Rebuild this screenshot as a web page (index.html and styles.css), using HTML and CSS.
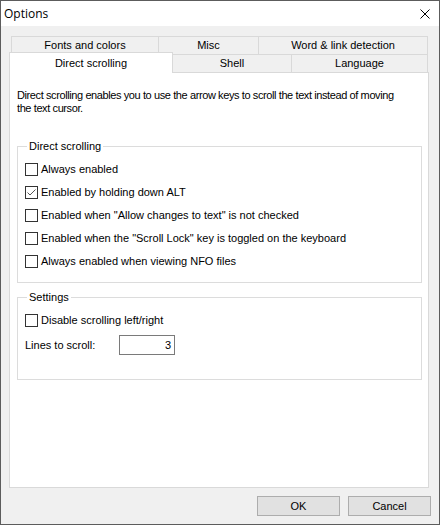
FILE: index.html
```html
<!DOCTYPE html>
<html lang="en">

<head>
    <meta charset="UTF-8">
    <title>Options</title>
    <link rel="stylesheet" href="styles.css">
</head>

<body>
    <div class="window">
        <div class="titlebar">
            <span class="title">Options</span>
            <svg class="close" width="10" height="10" viewBox="0 0 10 10">
                <path d="M0.5 0.5 L9.5 9.5 M9.5 0.5 L0.5 9.5" stroke="#000" stroke-width="1" fill="none" />
            </svg>
        </div>
        <div class="content">
            <div class="tabs">
                <div class="tabrow back">
                    <div class="tab t-fonts">Fonts and colors</div>
                    <div class="tab t-misc">Misc</div>
                    <div class="tab t-word">Word &amp; link detection</div>
                </div>
                <div class="tabrow front">
                    <div class="tab sel t-direct">Direct scrolling</div>
                    <div class="tab t-shell">Shell</div>
                    <div class="tab t-lang">Language</div>
                </div>
            </div>
            <div class="panel">
                <p class="intro">Direct scrolling enables you to use the arrow keys to scroll the text instead of moving<br>the text cursor.</p>

                <fieldset class="group g-direct">
                    <legend>Direct scrolling</legend>
                    <label class="check"><span class="box"></span>Always enabled</label>
                    <label class="check"><span class="box"><svg width="11" height="11" viewBox="0 0 11 11"><path d="M1.5 5.5 L4 8 L9.5 2.5" stroke="#555" stroke-width="1" fill="none" /></svg></span>Enabled by holding down ALT</label>
                    <label class="check"><span class="box"></span>Enabled when "Allow changes to text" is not checked</label>
                    <label class="check"><span class="box"></span>Enabled when the "Scroll Lock" key is toggled on the keyboard</label>
                    <label class="check"><span class="box"></span>Always enabled when viewing NFO files</label>
                </fieldset>

                <fieldset class="group g-settings">
                    <legend>Settings</legend>
                    <label class="check"><span class="box"></span>Disable scrolling left/right</label>
                    <div class="field">
                        <span class="field-label">Lines to scroll:</span>
                        <span class="input">3</span>
                    </div>
                </fieldset>
            </div>
            <div class="buttons">
                <div class="btn">OK</div>
                <div class="btn">Cancel</div>
            </div>
        </div>
    </div>
</body>

</html>
```

FILE: styles.css
```css
body,
p,
fieldset,
legend {
    margin: 0;
    padding: 0;
}

body {
    background: #fff;
    font: 11px/13px "Liberation Sans", Arial, sans-serif;
    color: #000;
}

.window {
    width: 440px;
    height: 525px;
    box-sizing: border-box;
    border: 1px solid #5c5c5c;
    background: #f0f0f0;
    display: flex;
    flex-direction: column;
}

.titlebar {
    height: 25px;
    background: #fff;
    display: flex;
    align-items: center;
    justify-content: space-between;
    padding: 0 9px 0 3px;
}

.title {
    font: 12px "Open Sans", "Noto Sans", sans-serif;
    margin-top: -1px;
}

.content {
    flex: 1;
    padding: 10px 10px 0 8px;
}

/* tabs */
.tabrow {
    display: flex;
}

.tabrow.back {
    margin-left: 2px;
    height: 19px;
}

.tabrow.front {
    margin-top: -1px;
    height: 18px;
    align-items: flex-end;
}

.tab {
    box-sizing: border-box;
    height: 19px;
    border: 1px solid #d9d9d9;
    background: #f0f0f0;
    display: flex;
    align-items: center;
    justify-content: center;
    margin-left: -1px;
}

.tab:first-child {
    margin-left: 0;
}

.front .tab {
    height: 18px;
    border-bottom: none;
}

.front .tab.sel {
    height: 21px;
    margin-bottom: -1px;
    background: #fff;
    position: relative;
    z-index: 1;
}

.t-fonts { width: 148px; }
.t-misc { width: 101px; }
.t-word { width: 170px; }
.t-direct { width: 164px; }
.t-shell { width: 120px; }
.t-lang { width: 137px; }

/* panel */
.panel {
    box-sizing: border-box;
    width: 420px;
    height: 416px;
    background: #fff;
    border: 1px solid #d9d9d9;
    padding: 16px 6px 0 7px;
}

.intro {
    margin-bottom: 25px;
    white-space: nowrap;
    letter-spacing: -0.4px;
}

.group {
    border: 1px solid #dcdcdc;
    padding: 0 7px 14px 7px;
}

.group legend {
    padding: 0 2px;
    margin-left: 2px;
    line-height: 13px;
}

.g-settings {
    margin-top: 8px;
    padding-bottom: 24px;
}

.check {
    display: flex;
    align-items: center;
    height: 13px;
    margin-top: 10px;
}

.box {
    box-sizing: border-box;
    width: 13px;
    height: 13px;
    border: 1px solid #333;
    background: #fff;
    margin-right: 3px;
    display: flex;
}

.field {
    display: flex;
    align-items: center;
    margin-top: 8px;
}

.field-label {
    width: 94px;
}

.input {
    box-sizing: border-box;
    width: 56px;
    height: 20px;
    border: 1px solid #7a7a7a;
    text-align: right;
    padding: 3px 3px 0 0;
    line-height: 13px;
}

/* buttons */
.buttons {
    display: flex;
    justify-content: flex-end;
    gap: 8px;
    margin-top: 8px;
    margin-right: -2px;
}

.btn {
    box-sizing: border-box;
    width: 83px;
    height: 20px;
    background: #e1e1e1;
    border: 1px solid #adadad;
    display: flex;
    align-items: center;
    justify-content: center;
}
```
